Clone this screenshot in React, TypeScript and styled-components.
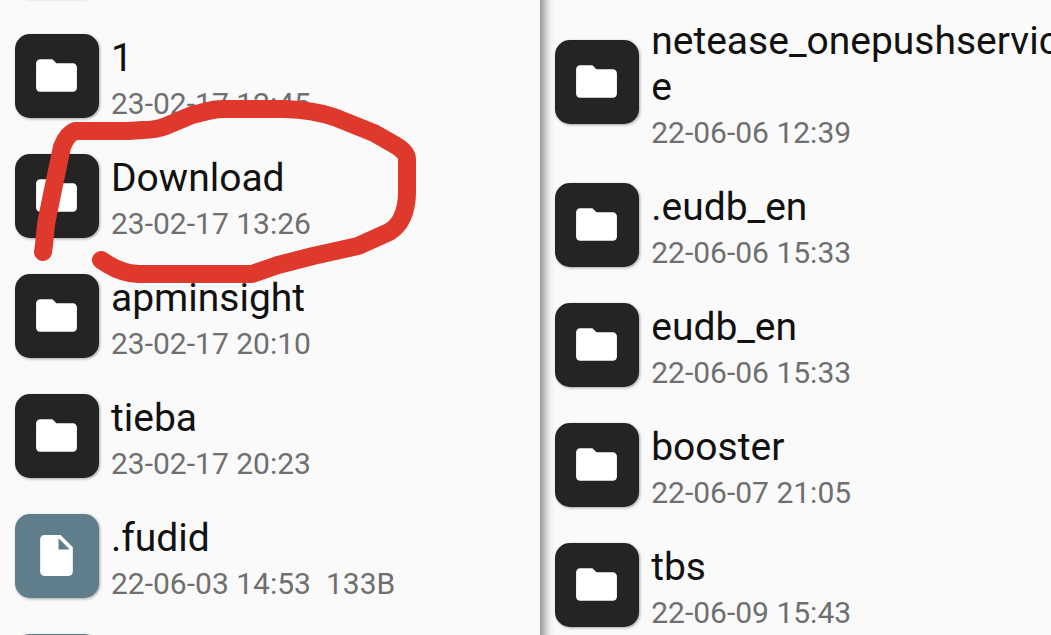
import React from "react";
import styled, { createGlobalStyle } from "styled-components";

const GlobalStyle = createGlobalStyle`
  * { box-sizing: border-box; }
  html, body { margin: 0; height: 100%; overflow: hidden; }
  #root { height: 100%; }
  body { background: #fafafa; font-family: Roboto, "Noto Sans", sans-serif; }
`;

const Browser = styled.main`
  position: relative;
  display: flex;
  height: 100%;
  overflow: hidden;
`;

const Pane = styled.section<{ $raised?: boolean }>`
  flex: 0 0 51.4%;
  min-width: 0;
  overflow: hidden;
  background: ${(p) =>
    p.$raised
      ? "linear-gradient(to right, #989898 0, #bcbcbc 4px, #dedede 8px, #f4f4f4 12px, #fafafa 15px) #fafafa"
      : "#fafafa"};
`;

const FileList = styled.ul<{ $scrolled: number }>`
  list-style: none;
  margin: ${(p) => -p.$scrolled}px 0 0;
  padding: 0;
`;

const Row = styled.button`
  display: flex;
  align-items: center;
  gap: 12px;
  width: 100%;
  min-height: 120px;
  padding: 0 12px 0 15px;
  border: 0;
  background: none;
  font: inherit;
  text-align: left;
`;

const Tile = styled.span<{ $kind: Kind }>`
  display: flex;
  flex: none;
  align-items: center;
  justify-content: center;
  width: 84px;
  height: 84px;
  padding: 0 1px 1px 0;
  border-radius: 15px;
  background: ${(p) => (p.$kind === "folder" ? "#242424" : "#607d8b")};
  box-shadow: 1px 1px 3px rgba(0, 0, 0, 0.35);
`;

const Glyph = styled.svg`
  width: 49px;
  height: 49px;
  fill: #fff;
`;

const Details = styled.span`
  display: flex;
  flex: 1;
  flex-direction: column;
  gap: 5px;
  min-width: 0;
  padding: 19px 0 14px;
`;

const Name = styled.span`
  color: #111;
  font-size: 39px;
  line-height: 46px;
  word-break: break-all;
`;

const Meta = styled.span`
  display: flex;
  gap: 15px;
  color: #6f6f6f;
  font-size: 30px;
  line-height: 36px;
`;

const Scribble = styled.svg`
  position: absolute;
  top: 0;
  left: 0;
  width: 440px;
  height: 300px;
  pointer-events: none;
  fill: none;
  stroke: #df382c;
  stroke-width: 18px;
  stroke-linecap: round;
  stroke-linejoin: round;
`;

type Kind = "folder" | "file";

interface Entry {
  kind: Kind;
  name?: string;
  date?: string;
  size?: string;
}

const shapes: Record<Kind, string> = {
  folder:
    "M10 4H4c-1.1 0-1.99.9-1.99 2L2 18c0 1.1.9 2 2 2h16c1.1 0 2-.9 2-2V8c0-1.1-.9-2-2-2h-8l-2-2z",
  file: "M6 2c-1.1 0-1.99.9-1.99 2L4 20c0 1.1.89 2 1.99 2H18c1.1 0 2-.9 2-2V8l-6-6H6zm7 7V3.5L18.5 9H13z",
};

const leftEntries: Entry[] = [
  { kind: "folder" },
  { kind: "folder", name: "1", date: "23-02-17 12:45" },
  { kind: "folder", name: "Download", date: "23-02-17 13:26" },
  { kind: "folder", name: "apminsight", date: "23-02-17 20:10" },
  { kind: "folder", name: "tieba", date: "23-02-17 20:23" },
  { kind: "file", name: ".fudid", date: "22-06-03 14:53", size: "133B" },
  { kind: "file" },
];

const rightEntries: Entry[] = [
  { kind: "folder", name: "netease_onepushservice", date: "22-06-06 12:39" },
  { kind: "folder", name: ".eudb_en", date: "22-06-06 15:33" },
  { kind: "folder", name: "eudb_en", date: "22-06-06 15:33" },
  { kind: "folder", name: "booster", date: "22-06-07 21:05" },
  { kind: "folder", name: "tbs", date: "22-06-09 15:43" },
];

function EntryRow({ kind, name, date, size }: Entry) {
  return (
    <li>
      <Row type="button" aria-label={name ?? kind}>
        <Tile $kind={kind}>
          <Glyph viewBox="0 0 24 24" aria-hidden="true">
            <path d={shapes[kind]} />
          </Glyph>
        </Tile>
        {name && (
          <Details>
            <Name>{name}</Name>
            <Meta>
              <span>{date}</span>
              {size && <span>{size}</span>}
            </Meta>
          </Details>
        )}
      </Row>
    </li>
  );
}

export default function App() {
  return (
    <>
      <GlobalStyle />
      <Browser>
        <Pane>
          <FileList $scrolled={104}>
            {leftEntries.map((entry, i) => (
              <EntryRow key={i} {...entry} />
            ))}
          </FileList>
        </Pane>
        <Pane $raised>
          <FileList $scrolled={1}>
            {rightEntries.map((entry, i) => (
              <EntryRow key={i} {...entry} />
            ))}
          </FileList>
        </Pane>
        <Scribble viewBox="0 0 440 300" aria-hidden="true">
          <path d="M43 252C45 240 45 229 47 219L55 180L62 147Q67 134 75 131H128L143 130Q156 130 166 126L192 115L208 111Q215 109 223 109H285Q313 110 334 117L374 133L395 145Q407 152 407 159V192C407 212 400 226 389 232L358 246L313 256L278 265L252 274H138Q122 273 109 265L101 260" />
        </Scribble>
      </Browser>
    </>
  );
}
